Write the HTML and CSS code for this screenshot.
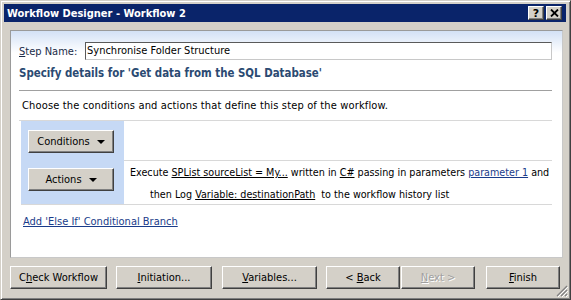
FILE: index.html
```html
<!DOCTYPE html>
<html>
<head>
<meta charset="utf-8">
<link rel="stylesheet" href="styles.css">
</head>
<body>
<div class="window">
  <div class="titlebar">
    <span class="title">Workflow Designer - Workflow 2</span>
    <div class="tbtns">
      <span class="tbtn">?</span>
      <span class="tbtn x">
        <svg width="9" height="8" viewBox="0 0 9 8"><path d="M1 0.5 L8 7.5 M8 0.5 L1 7.5" stroke="#000" stroke-width="1.8"/></svg>
      </span>
    </div>
  </div>
  <div class="panel">
    <div class="stepname">
      <label class="lbl"><u>S</u>tep Name:</label>
      <div class="input">Synchronise Folder Structure</div>
    </div>
    <div class="heading">Specify details for 'Get data from the SQL Database'</div>
    <div class="desc">Choose the conditions and actions that define this step of the workflow.</div>
    <div class="branch">
      <div class="left">
        <div class="btn drop"><span>Conditions</span><span class="tri"></span></div>
        <div class="btn drop"><span>Actions</span><span class="tri"></span></div>
      </div>
      <div class="right">
        <div class="cond"></div>
        <div class="acts">
          <div class="line1">Execute <u>SPList sourceList = My...</u> written in <u>C#</u> passing in parameters <a class="lnk">parameter 1</a> and</div>
          <div class="line2">then Log <u>Variable: destinationPath</u>&nbsp; to the workflow history list</div>
        </div>
      </div>
    </div>
    <a class="lnk elseif">Add 'Else If' Conditional Branch</a>
  </div>
  <div class="footer">
    <div class="btn fb b1"><span>C<u>h</u>eck Workflow</span></div>
    <div class="btn fb b2"><span><u>I</u>nitiation...</span></div>
    <div class="btn fb b3"><span><u>V</u>ariables...</span></div>
    <div class="btn fb b4"><span>&lt; <u>B</u>ack</span></div>
    <div class="btn fb b5 dis"><span><u>N</u>ext &gt;</span></div>
    <div class="btn fb b6"><span><u>F</u>inish</span></div>
  </div>
  <div class="grip">
    <svg width="12" height="12" viewBox="0 0 12 12"><path d="M11 1 L1 11 M11 5 L5 11 M11 9 L9 11" stroke="#808080" stroke-width="1.2"/><path d="M12 2 L2 12 M12 6 L6 12 M12 10 L10 12" stroke="#fff" stroke-width="1"/></svg>
  </div>
</div>
</body>
</html>
```
FILE: styles.css
```css
* { box-sizing: border-box; }
html, body { margin: 0; padding: 0; }
body {
  width: 571px; height: 300px; overflow: hidden;
  background: #d4d0c8;
  font-family: "DejaVu Sans Condensed", "DejaVu Sans", sans-serif;
  font-size: 11px;
  color: #000;
}
.window {
  position: relative;
  width: 571px; height: 300px;
  border-top: 1px solid #d4d0c8;
  border-left: 1px solid #d4d0c8;
  border-right: 1px solid #404040;
  border-bottom: 1px solid #404040;
  box-shadow: inset 1px 1px 0 #fff, inset -1px -1px 0 #808080;
  padding: 3px 4px 0 3px;
  display: flex; flex-direction: column;
}
.titlebar {
  height: 18px;
  background: #0a246a;
  display: flex; align-items: center; justify-content: space-between;
  padding: 0 4px 0 3px;
}
.title {
  color: #fff; font-weight: bold; font-size: 11px;
}
.tbtns { display: flex; gap: 2px; }
.tbtn {
  width: 16px; height: 14px;
  background: #d4d0c8;
  border-top: 1px solid #fff; border-left: 1px solid #fff;
  border-right: 1px solid #404040; border-bottom: 1px solid #404040;
  box-shadow: inset -1px -1px 0 #808080;
  font-family: "DejaVu Sans", sans-serif;
  font-weight: bold; font-size: 11px; line-height: 11px;
  display: flex; align-items: center; justify-content: center;
}
.panel {
  margin: 8px 3px 0 6px;
  height: 228px;
  border: 1px solid #9a9a9a;
  border-right-color: #c8c8c8; border-bottom-color: #c8c8c8;
  background: linear-gradient(#d3e1f6 0px, #ffffff 22px, #ffffff);
  padding: 11px 10px 0 8px;
  display: flex; flex-direction: column;
}
.stepname { display: flex; align-items: center; height: 18px; }
.lbl { width: 66px; color: #1a2b48; flex: none; }
.input {
  flex: 1; height: 18px;
  border-top: 1px solid #5a5a5a; border-left: 1px solid #5a5a5a;
  border-right: 1px solid #c8c8c8; border-bottom: 1px solid #c8c8c8;
  background: #fff; padding: 1px 1px; line-height: 14px;
}
.heading {
  padding: 7px 1px 10px 0;
  line-height: 13px;
  font-weight: bold; color: #2b4a72; font-size: 11.4px;
  border-bottom: 1px solid #a0a0a0;
}
.desc {
  padding: 8px 3px 8px;
  line-height: 13px;
  letter-spacing: 0.15px;
  border-bottom: 1px solid #d8d8d8;
}
.branch {
  display: flex; height: 84px;
  margin-left: 2px;
  border-bottom: 1px solid #d8d8d8;
}
.left {
  width: 103px; flex: none; background: #c6d9f5;
  display: flex; flex-direction: column; gap: 15px;
  padding: 9px 0 0 7px;
}
.btn {
  background: #d4d0c8;
  border-top: 1px solid #fff; border-left: 1px solid #fff;
  border-right: 1px solid #404040; border-bottom: 1px solid #404040;
  box-shadow: inset -1px -1px 0 #808080;
  display: flex; align-items: center; justify-content: center;
  flex: none;
}
.drop { width: 86px; height: 23px; gap: 7px; }
.tri {
  width: 0; height: 0;
  border-left: 4px solid transparent; border-right: 4px solid transparent;
  border-top: 4px solid #000;
}
.right { flex: 1; min-width: 0; display: flex; flex-direction: column; }
.cond { height: 40px; border-bottom: 1px solid #d8d8d8; flex: none; }
.acts { padding: 1px 0 0 6px; line-height: 22px; white-space: nowrap; font-size: 10.7px; }
.line2 { padding-left: 20px; }
.lnk { color: #1a3c8a; text-decoration: underline; }
.elseif { margin-top: 10px; margin-left: 4px; line-height: 13px; align-self: flex-start; }
.footer {
  display: flex;
  padding: 8px 0 0 6px;
}
.fb { height: 23px; }
.b1 { width: 97px; }
.b2 { width: 96px; margin-left: 9px; }
.b3 { width: 95px; margin-left: 10px; }
.b4 { width: 74px; margin-left: 9px; }
.b5 { width: 74px; margin-left: 1px; }
.b6 { width: 74px; margin-left: 11px; }
.dis { color: #a0a0a0; text-shadow: 1px 1px 0 #fff; }
.grip { position: absolute; right: 2px; bottom: 2px; width: 12px; height: 12px; }
```
